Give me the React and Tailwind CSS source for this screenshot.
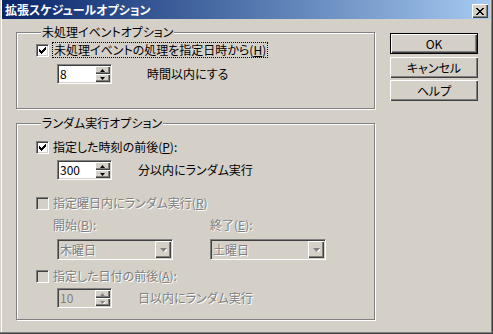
import React from "react";

const raised =
  "shadow-[inset_1px_1px_0_#fff,inset_-1px_-1px_0_#404040,inset_-2px_-2px_0_#808080]";
const sunken =
  "border border-t-[#808080] border-l-[#808080] border-b-white border-r-white shadow-[inset_1px_1px_0_#404040,inset_-1px_-1px_0_#D4D0C8]";
const etched =
  "border border-[#808080] shadow-[1px_1px_0_#fff,inset_1px_1px_0_#fff]";
const grayText = "text-[#808080] [text-shadow:1px_1px_0_#fff]";

function Arrow({ up, disabled, w = 7 }) {
  const h = Math.ceil(w / 2);
  const pts = up ? `0,${h} ${w},${h} ${w / 2},0` : `0,0 ${w},0 ${w / 2},${h}`;
  return (
    <svg width={w} height={h} viewBox={`0 0 ${w} ${h}`} className="block">
      {disabled && (
        <polygon points={pts} fill="#fff" transform="translate(1,1)" />
      )}
      <polygon points={pts} fill={disabled ? "#808080" : "#000"} />
    </svg>
  );
}

function CheckBox({ checked, disabled }) {
  return (
    <div
      className={`w-[13px] h-[13px] shrink-0 flex items-center justify-center ${sunken} ${
        disabled ? "bg-[#D4D0C8]" : "bg-white"
      }`}
    >
      {checked && (
        <svg width="7" height="7" viewBox="0 0 7 7" shapeRendering="crispEdges">
          <path
            d="M6 0h1v3h-1zM5 1h1v3h-1zM4 2h1v3h-1zM3 3h1v3h-1zM2 4h1v3h-1zM1 3h1v3h-1zM0 2h1v3h-1z"
            fill="#000"
          />
        </svg>
      )}
    </div>
  );
}

function Spin({ value, disabled }) {
  return (
    <div
      className={`flex w-[55px] h-[20px] shrink-0 p-[1px] ${sunken} ${
        disabled ? "bg-[#D4D0C8]" : "bg-white"
      }`}
    >
      <div
        className={`flex-1 pl-[1px] leading-[16px] ${
          disabled ? "text-[#808080]" : "text-black"
        }`}
      >
        {value}
      </div>
      <div className="w-[15px] flex flex-col">
        <div className={`flex-1 bg-[#D4D0C8] flex items-center justify-center ${raised}`}>
          <Arrow up w={5} disabled={disabled} />
        </div>
        <div className={`flex-1 bg-[#D4D0C8] flex items-center justify-center ${raised}`}>
          <Arrow w={5} disabled={disabled} />
        </div>
      </div>
    </div>
  );
}

function Combo({ value }) {
  return (
    <div className={`flex w-[116px] h-[21px] p-[1px] bg-[#D4D0C8] ${sunken}`}>
      <div className={`flex-1 pl-[1px] leading-[17px] ${grayText}`}>{value}</div>
      <div
        className={`w-[16px] bg-[#D4D0C8] flex items-center justify-center ${raised}`}
      >
        <Arrow w={7} disabled />
      </div>
    </div>
  );
}

function Button({ children, isDefault }) {
  return (
    <div
      className={`h-[21px] w-[88px] flex items-center justify-center ${
        isDefault ? "border border-black" : ""
      }`}
    >
      <div className={`w-full h-full flex items-center justify-center ${raised}`}>
        {children}
      </div>
    </div>
  );
}

export default function App() {
  return (
    <div className="w-[493px] h-[334px] bg-[#D4D0C8] pl-[2px] pr-[3px] flex flex-col text-[12px] leading-[14px] text-black font-['Noto_Sans_CJK_JP',sans-serif] [font-feature-settings:'palt'] shadow-[inset_-1px_-1px_0_#404040,inset_-2px_-2px_0_#808080,inset_1px_0_0_#D4D0C8,inset_2px_0_0_#fff] overflow-hidden">
      {/* Title bar */}
      <div className="h-[19px] flex items-start justify-between bg-gradient-to-r from-[#0A246A] to-[#A6CAF0]">
        <span className="pl-[3px] pt-[2px] text-white font-bold text-[12px] leading-[15px]">
          拡張スケジュールオプション
        </span>
        <div
          className={`mt-[4px] mr-[2px] w-[16px] h-[14px] bg-[#D4D0C8] flex items-center justify-center ${raised}`}
        >
          <svg width="8" height="7" viewBox="0 0 8 7" shapeRendering="crispEdges">
            <path
              d="M0 0h2v1h-2zM6 0h2v1h-2zM1 1h2v1h-2zM5 1h2v1h-2zM2 2h4v1h-4zM3 3h2v1h-2zM2 4h4v1h-4zM1 5h2v1h-2zM5 5h2v1h-2zM0 6h2v1h-2zM6 6h2v1h-2z"
              fill="#000"
            />
          </svg>
        </div>
      </div>

      <div className="flex pl-[14px]">
        {/* Left column */}
        <div className="w-[359px] flex flex-col">
          <fieldset className={`mt-[6px] pl-[19px] pb-[24px] ${etched}`}>
            <legend className="ml-[5px] px-[1px] bg-[#D4D0C8] leading-[14px]">
              未処理イベントオプション
            </legend>
            <div className="mt-[3px] h-[16px] flex items-center">
              <CheckBox checked />
              <span className="ml-[3px] px-[1px] h-[16px] leading-[14px] border border-dotted border-black">
                未処理イベントの処理を指定日時から(<u>H</u>)
              </span>
            </div>
            <div className="mt-[6px] ml-[21px] flex items-center">
              <Spin value="8" />
              <span className="ml-[35px]">時間以内にする</span>
            </div>
          </fieldset>

          <fieldset className={`mt-[7px] pl-[19px] pb-[11px] ${etched}`}>
            <legend className="ml-[5px] px-[1px] bg-[#D4D0C8] leading-[14px]">
              ランダム実行オプション
            </legend>
            <div className="mt-[9px] h-[16px] flex items-center">
              <CheckBox checked />
              <span className="ml-[4px]">
                指定した時刻の前後(<u>P</u>):
              </span>
            </div>
            <div className="mt-[5px] ml-[21px] flex items-center">
              <Spin value="300" />
              <span className="ml-[26px]">分以内にランダム実行</span>
            </div>

            <div className="mt-[15px] h-[16px] flex items-center">
              <CheckBox disabled />
              <span className={`ml-[4px] ${grayText}`}>
                指定曜日内にランダム実行(<u>R</u>)
              </span>
            </div>
            <div className="mt-[7px] ml-[17px] flex">
              <span className={`w-[157px] ${grayText}`}>
                開始(<u>B</u>):
              </span>
              <span className={grayText}>
                終了(<u>E</u>):
              </span>
            </div>
            <div className="mt-[7px] ml-[21px] flex gap-[37px]">
              <Combo value="木曜日" />
              <Combo value="土曜日" />
            </div>

            <div className="mt-[8px] h-[16px] flex items-center">
              <CheckBox disabled />
              <span className={`ml-[4px] ${grayText}`}>
                指定した日付の前後(<u>A</u>):
              </span>
            </div>
            <div className="mt-[4px] ml-[21px] flex items-center">
              <Spin value="10" disabled />
              <span className={`ml-[26px] ${grayText}`}>日以内にランダム実行</span>
            </div>
          </fieldset>
        </div>

        {/* Buttons */}
        <div className="ml-[15px] mt-[14px] flex flex-col">
          <Button isDefault>OK</Button>
          <div className="mt-[3px]">
            <Button>キャンセル</Button>
          </div>
          <div className="mt-[2px]">
            <Button>ヘルプ</Button>
          </div>
        </div>
      </div>
    </div>
  );
}
